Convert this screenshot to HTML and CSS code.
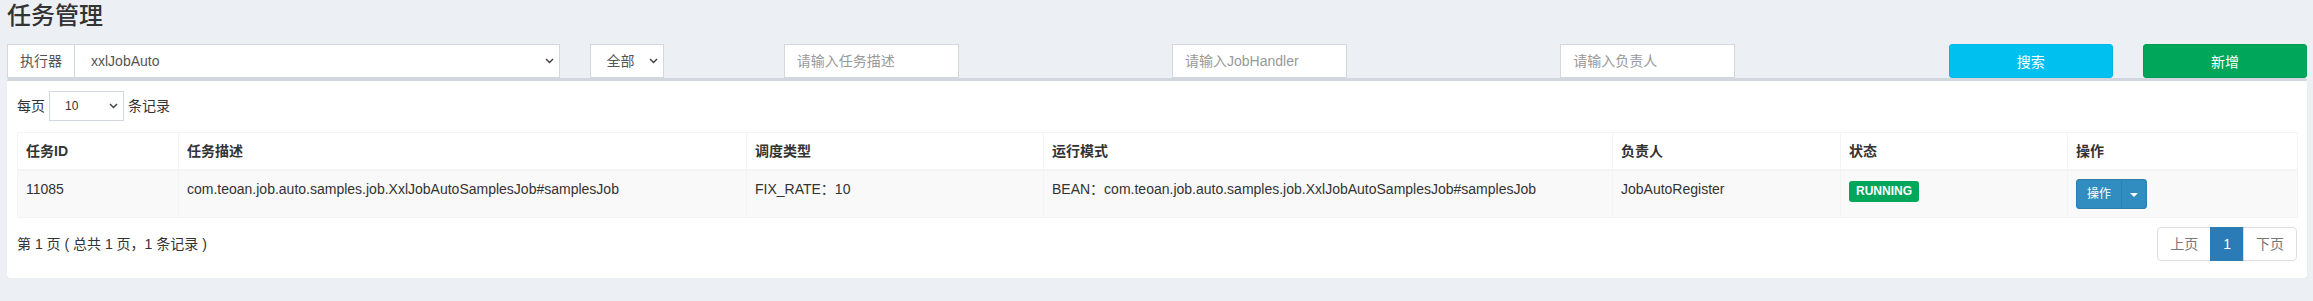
FILE: index.html
```html
<!DOCTYPE html>
<html lang="zh-CN">
<head>
  <meta charset="UTF-8">
  <meta name="viewport" content="width=device-width, initial-scale=1.0">
  <title>任务管理</title>
  <link rel="stylesheet" href="styles.css">
</head>
<body>
  <div class="content-wrapper">
    <section class="content-header">
      <h1>任务管理</h1>
    </section>

    <section class="content">
      <!-- search bar -->
      <div class="filter-row">
        <div class="col-3">
          <div class="input-group">
            <span class="input-group-addon">执行器</span>
            <div class="select-wrap grow">
              <select class="form-control" id="jobGroup">
                <option>xxlJobAuto</option>
              </select>
              <svg class="chevron" width="9" height="6" viewBox="0 0 9 6"><polyline points="1,1 4.5,4.5 8,1"/></svg>
            </div>
          </div>
        </div>
        <div class="col-1">
          <div class="select-wrap status-select">
            <select class="form-control" id="triggerStatus">
              <option>全部</option>
            </select>
            <svg class="chevron" width="9" height="6" viewBox="0 0 9 6"><polyline points="1,1 4.5,4.5 8,1"/></svg>
          </div>
        </div>
        <div class="col-2">
          <input type="text" class="form-control search-input" placeholder="请输入任务描述">
        </div>
        <div class="col-2">
          <input type="text" class="form-control search-input" placeholder="请输入JobHandler">
        </div>
        <div class="col-2">
          <input type="text" class="form-control search-input" placeholder="请输入负责人">
        </div>
        <div class="col-1">
          <button type="button" class="btn btn-info" id="searchBtn">搜索</button>
        </div>
        <div class="col-1">
          <button type="button" class="btn btn-success">新增</button>
        </div>
      </div>

      <!-- job list -->
      <div class="box">
        <div class="length-row">
          <span>每页</span>
          <div class="select-wrap length-select">
            <select class="form-control">
              <option>10</option>
            </select>
            <svg class="chevron" width="9" height="6" viewBox="0 0 9 6"><polyline points="1,1 4.5,4.5 8,1"/></svg>
          </div>
          <span>条记录</span>
        </div>

        <table class="job-table">
          <colgroup>
            <col style="width: 161px">
            <col style="width: 568px">
            <col style="width: 297px">
            <col style="width: 569px">
            <col style="width: 228px">
            <col style="width: 227px">
            <col style="width: 230px">
          </colgroup>
          <thead>
            <tr>
              <th>任务ID</th>
              <th>任务描述</th>
              <th>调度类型</th>
              <th>运行模式</th>
              <th>负责人</th>
              <th>状态</th>
              <th>操作</th>
            </tr>
          </thead>
          <tbody>
            <tr>
              <td>11085</td>
              <td>com.teoan.job.auto.samples.job.XxlJobAutoSamplesJob#samplesJob</td>
              <td>FIX_RATE：10</td>
              <td>BEAN：com.teoan.job.auto.samples.job.XxlJobAutoSamplesJob#samplesJob</td>
              <td>JobAutoRegister</td>
              <td><span class="label label-success">RUNNING</span></td>
              <td>
                <div class="btn-group">
                  <button type="button" class="btn-sm btn-primary">操作</button>
                  <button type="button" class="btn-sm btn-primary caret-btn"><span class="caret"></span></button>
                </div>
              </td>
            </tr>
          </tbody>
        </table>

        <div class="table-footer">
          <div class="table-info">第 1 页 ( 总共 1 页，1 条记录 )</div>
          <ul class="pagination">
            <li class="disabled"><a href="#">上页</a></li>
            <li class="active"><a href="#">1</a></li>
            <li class="disabled"><a href="#">下页</a></li>
          </ul>
        </div>
      </div>
    </section>
  </div>
</body>
</html>
```

FILE: styles.css
```css
body {
  margin: 0;
  background-color: #ecf0f5;
  font-family: "Liberation Sans", "Noto Sans CJK SC", sans-serif;
  font-size: 14px;
  line-height: 20px;
  color: #333;
}

.content-wrapper {
  padding: 0 6px 0 7px;
}

.content-header {
  height: 44px;
}

.content-header h1 {
  margin: 0;
  font-size: 24px;
  line-height: 32px;
  font-weight: 500;
}

/* search bar */
.filter-row {
  display: grid;
  grid-template-columns: repeat(12, 1fr);
  column-gap: 30px;
  height: 34px;
}

.col-3 {
  grid-column: span 3;
}

.col-2 {
  grid-column: span 2;
}

.col-1 {
  grid-column: span 1;
}

.input-group {
  display: flex;
  height: 34px;
}

.input-group-addon {
  padding: 0 12px;
  border: 1px solid #d2d6de;
  background: #fff;
  color: #555;
  line-height: 32px;
}

.form-control {
  box-sizing: border-box;
  height: 34px;
  padding: 6px 12px;
  border: 1px solid #d2d6de;
  border-radius: 0;
  background: #fff;
  color: #555;
  font-family: inherit;
  font-size: 14px;
  outline: none;
}

.form-control::placeholder {
  color: #999;
}

select.form-control {
  -webkit-appearance: none;
  appearance: none;
  width: 100%;
  padding-left: 16px;
}

.select-wrap {
  position: relative;
}

.select-wrap.grow {
  flex: 1;
}

.input-group .select-wrap select {
  border-left: none;
}

.chevron {
  position: absolute;
  right: 6px;
  top: 50%;
  margin-top: -3px;
  fill: none;
  stroke: #444;
  stroke-width: 1.5;
  pointer-events: none;
}

.status-select {
  width: 74px;
}

.search-input {
  width: 175px;
}

.btn {
  display: block;
  box-sizing: border-box;
  width: 100%;
  height: 34px;
  border: 1px solid transparent;
  border-radius: 3px;
  color: #fff;
  font-family: inherit;
  font-size: 14px;
  cursor: pointer;
}

.btn-info {
  background-color: #00c0ef;
  border-color: #00b8e6;
}

.btn-success {
  background-color: #00a65a;
  border-color: #009d55;
}

/* list box */
.box {
  margin-top: 0;
  padding: 10px 10px 17px;
  background: #fff;
  border-top: 3px solid #d2d6de;
  border-radius: 3px;
  box-shadow: 0 1px 1px rgba(0, 0, 0, 0.1);
}

.length-row {
  display: flex;
  align-items: center;
  gap: 4px;
  height: 30px;
}

.length-select {
  width: 75px;
}

.length-select select {
  height: 30px;
  padding: 5px 10px 5px 15px;
  font-size: 12px;
  color: #333;
}

.job-table {
  width: 100%;
  margin-top: 11px;
  border-collapse: collapse;
  table-layout: fixed;
  border: 1px solid #f4f4f4;
}

.job-table th,
.job-table td {
  padding: 8px;
  border: 1px solid #f4f4f4;
  text-align: left;
  vertical-align: top;
  white-space: nowrap;
  overflow: hidden;
}

.job-table thead th {
  border-bottom-width: 2px;
  font-weight: bold;
}

.job-table tbody tr {
  background-color: #f9f9f9;
}

.label {
  display: inline-block;
  margin-top: 2px;
  padding: 3px 7px;
  border-radius: 3px;
  font-size: 12px;
  line-height: 15px;
  font-weight: bold;
  color: #fff;
}

.label-success {
  background-color: #00a65a;
}

.btn-group {
  display: flex;
}

.btn-sm {
  height: 30px;
  padding: 5px 10px;
  border: 1px solid #2f7fae;
  font-family: inherit;
  font-size: 12px;
  line-height: 18px;
  color: #fff;
  cursor: pointer;
}

.btn-primary {
  background-color: #318cbf;
  border-radius: 3px 0 0 3px;
}

.caret-btn {
  margin-left: -1px;
  padding: 5px 8px;
  border-radius: 0 3px 3px 0;
}

.caret {
  display: inline-block;
  width: 0;
  height: 0;
  vertical-align: middle;
  border-top: 4px solid #fff;
  border-left: 4px solid transparent;
  border-right: 4px solid transparent;
}

/* footer */
.table-footer {
  display: flex;
  justify-content: space-between;
  align-items: center;
  margin-top: 9px;
}

.pagination {
  display: flex;
  margin: 0;
  padding: 0;
  list-style: none;
}

.pagination a {
  display: block;
  margin-left: -1px;
  padding: 6px 12px;
  border: 1px solid #ddd;
  background: #fff;
  color: #777;
  text-decoration: none;
}

.pagination li:first-child a {
  margin-left: 0;
  border-radius: 4px 0 0 4px;
}

.pagination li:last-child a {
  border-radius: 0 4px 4px 0;
}

.pagination .active a {
  background-color: #2b7bb6;
  border-color: #2b7bb6;
  color: #fff;
}
```
